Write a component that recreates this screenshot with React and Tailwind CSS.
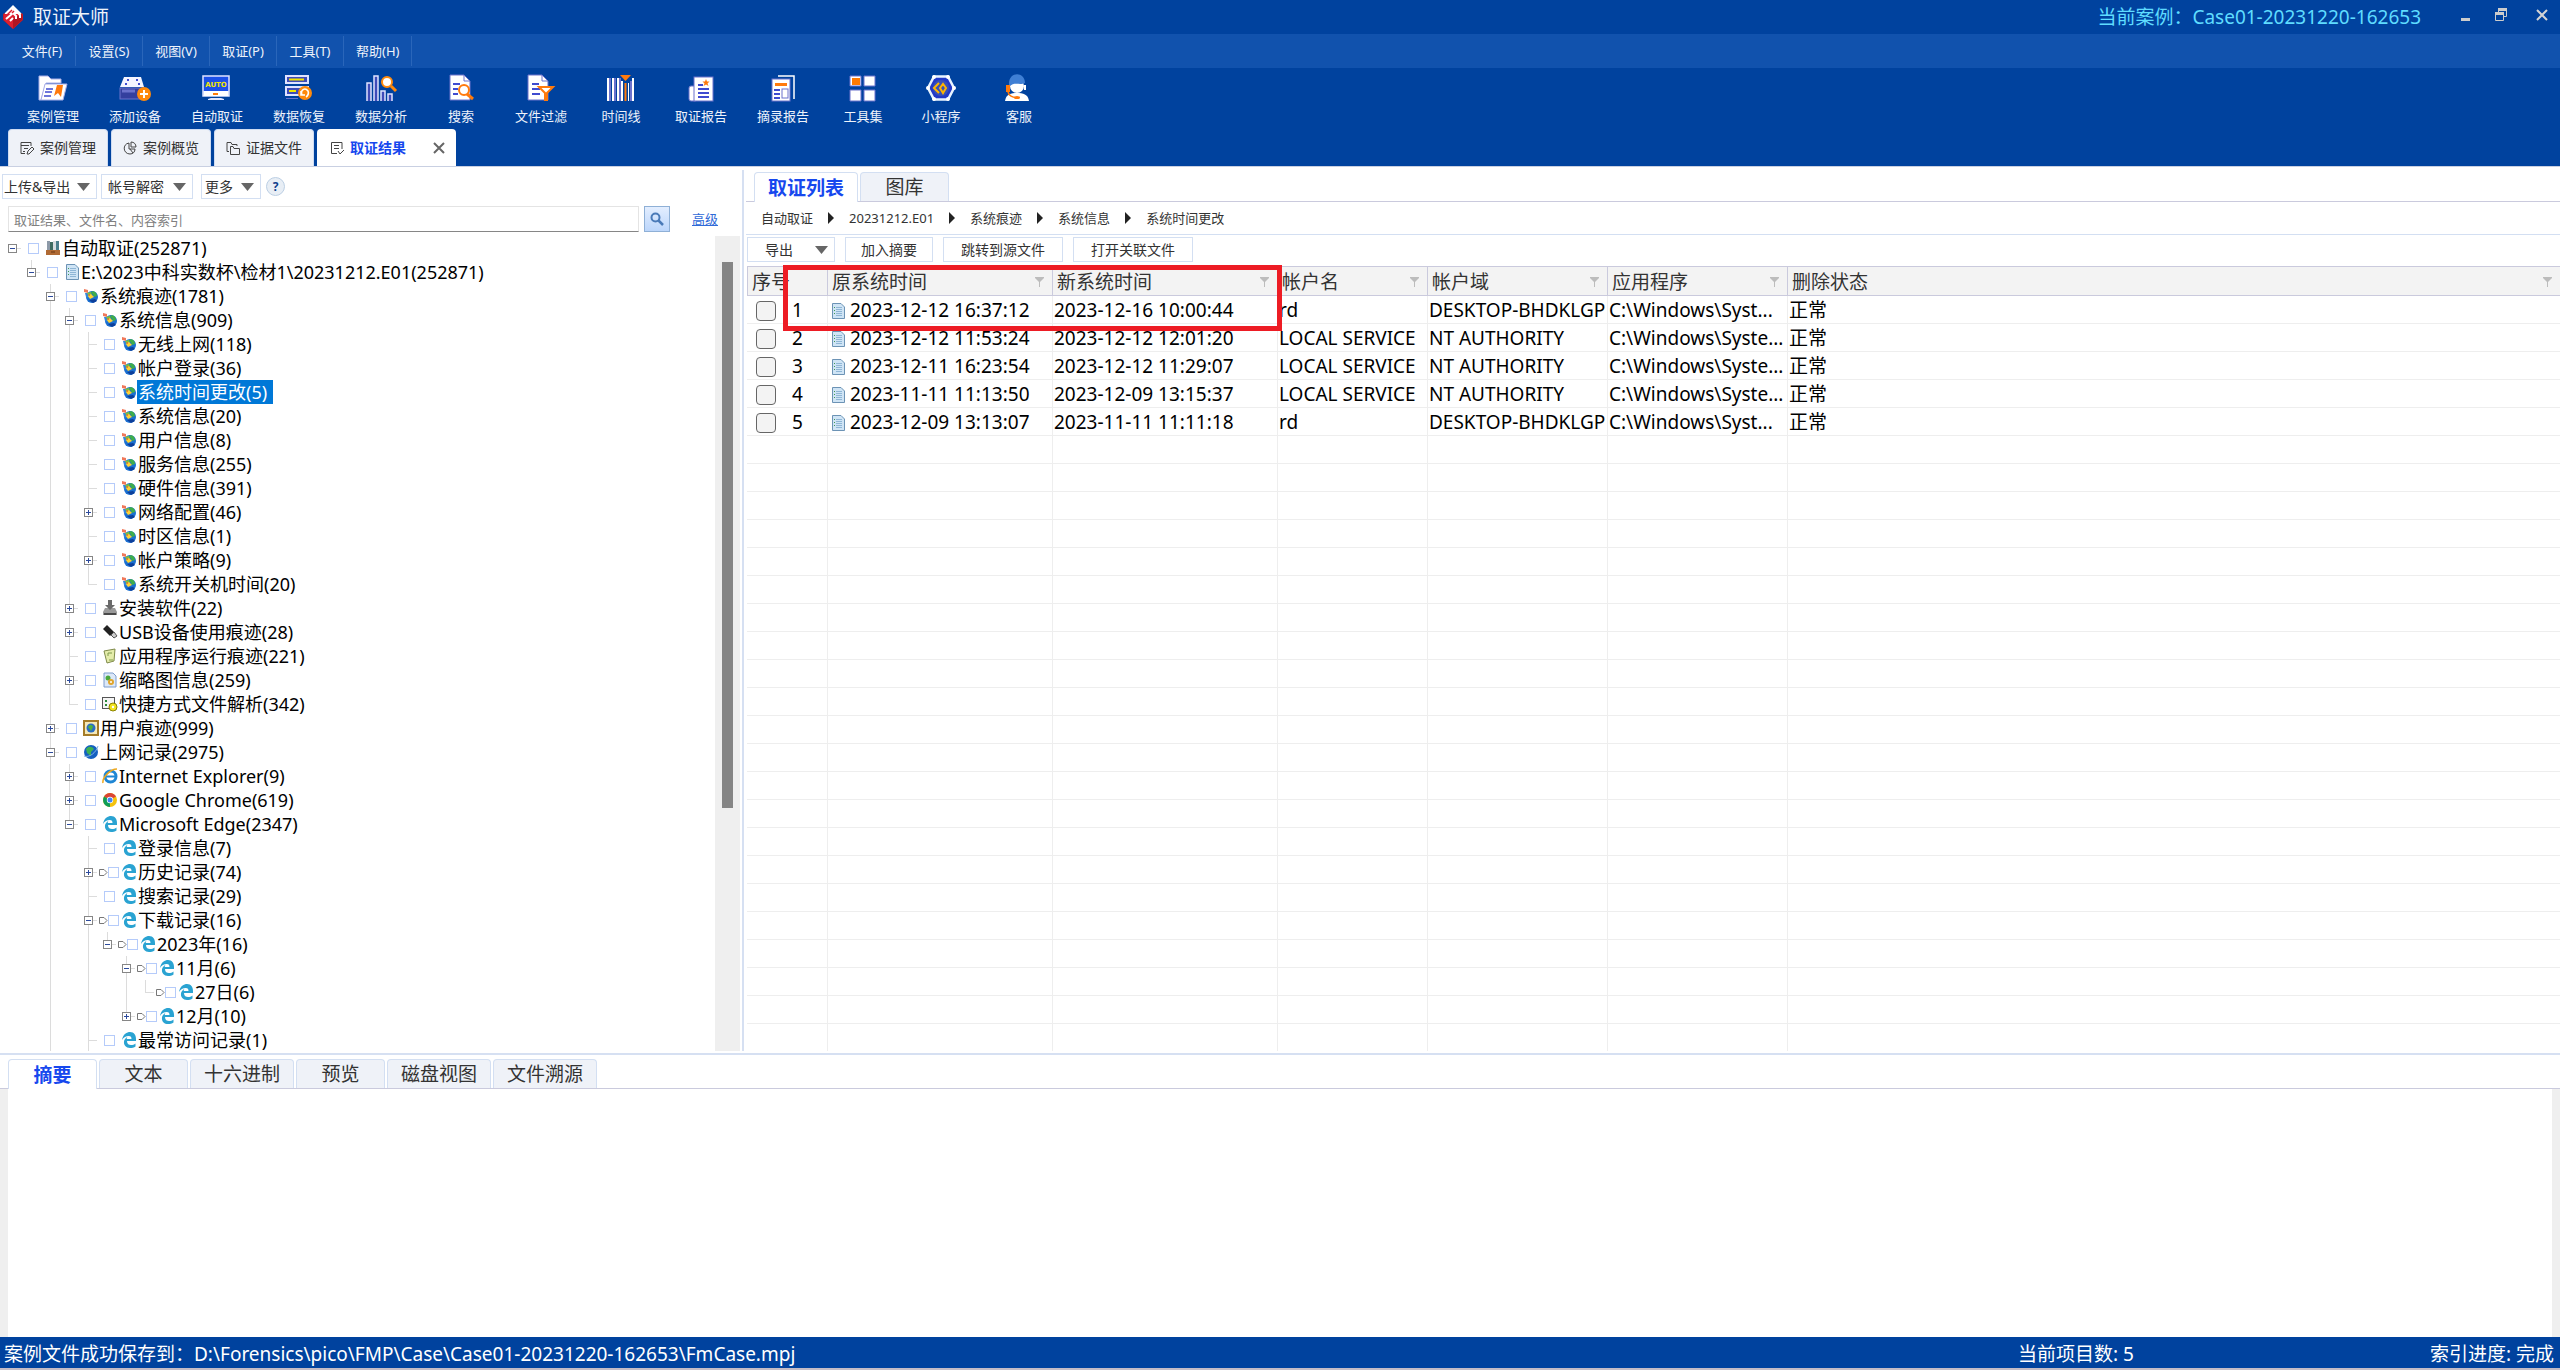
import React from "react";

/* ---------- window icons ---------- */

function Logo() {
  return (
    <svg width="20" height="24" viewBox="0 0 20 24" aria-hidden="true">
      <path d="M10 0 L19 9 H1 Z" fill="#fff" />
      <path d="M0 9 L2 8 V14 L10 24 L18 14 V8 L20 9 V15 L10 24 L0 15 Z" fill="#c41824" />
      <path d="M1 9 H19 V15 L10 24 L1 15 Z" fill="#dc2030" />
      <path d="M10 14 L19 9 V15 L10 24 Z" fill="#b01622" />
      <path d="M3 14 L10 8 L13 11 V14 M7 16 L10 13 M12 5 L17 10 V13" fill="none" stroke="#fff" strokeWidth="2" />
      <path d="M4 10 L9 5 M9 8 L11 6" stroke="#dc2030" strokeWidth="1.500" />
    </svg>
  );
}

function Caret() {
  return (
    <svg width="13" height="8" viewBox="0 0 13 8" aria-hidden="true">
      <path d="M0 0 H13 L6.500 8 Z" fill="#666" />
    </svg>
  );
}

const V = "#6b72cc";
const O = "#ff7a0c";

const toolbar = [
  {
    label: "案例管理",
    icon: (
      <>
        <path d="M1 25 V1 H10 L13 4 H23 V8 H8 L3 25 Z" fill="#fff" stroke="#a8aee8" />
        <path d="M7 9 H29 L25 25 H3 Z" fill="#fff" stroke="#a8aee8" />
        <path d="M8 14 H15 M7 17 H14 M6 21 H13" stroke="#3f4bd0" strokeWidth="1.500" />
        <path d="M19 10 H25 L23 22 L20 18 L16 21 Z" fill={O} />
      </>
    ),
  },
  {
    label: "添加设备",
    icon: (
      <>
        <path d="M4 2 H21 L24 12 H0 Z" fill="#f4f5ff" />
        <rect x="0" y="13" width="24" height="11" fill="#343f9e" stroke={V} />
        <path d="M2 16 H15" stroke={V} strokeWidth="3" />
        <path d="M7 5 h2 M16 5 h2 M5 9 h2 M18 9 h2" stroke="#3f4bd0" strokeWidth="2" />
        <circle cx="24" cy="19" r="7" fill="#ff8a0c" />
        <path d="M20 19 H28 M24 15 V23" stroke="#fff" strokeWidth="2" />
      </>
    ),
  },
  {
    label: "自动取证",
    icon: (
      <>
        <rect x="1" y="1" width="26" height="20" fill="#1c50e8" stroke="#dfe3ff" strokeWidth="1.500" />
        <rect x="1.500" y="16" width="25" height="5" fill="#fff" />
        <text x="14" y="12" textAnchor="middle" fontSize="7" fontWeight="700" fontFamily="DejaVu Sans, sans-serif" fill="#f2e500">AUTO</text>
        <path d="M11 19 H16" stroke={O} strokeWidth="2" />
        <path d="M9 23 H19 L22 24 V25 H6 V24 Z" fill="#dfe3ff" />
      </>
    ),
  },
  {
    label: "数据恢复",
    icon: (
      <>
        <rect x="2" y="1" width="22" height="7" fill="#3f4bb8" stroke="#dfe3ff" strokeWidth="2" />
        <rect x="2" y="12" width="22" height="8" fill="#3f4bb8" stroke="#dfe3ff" strokeWidth="2" />
        <path d="M5 4.500 H20 M5 16 H12" stroke="#f2e500" strokeWidth="2" />
        <path d="M2 23.500 H14" stroke={V} />
        <circle cx="21" cy="18" r="7" fill="#ff8a0c" />
        <path d="M18 20 C16 15 21 12 24 16 C25 18 24 21 22 22 M17 16 V20 H21" fill="none" stroke="#fff" strokeWidth="1.600" />
      </>
    ),
  },
  {
    label: "数据分析",
    icon: (
      <>
        <path d="M1 26 V8 H5 V26 M8 26 V1 H12 V26 M15 26 V16 H19 V26 M22 26 V19 H26 V26" fill="#3f4bb8" stroke="#dfe3ff" strokeWidth="1.500" />
        <circle cx="21" cy="7" r="5" fill="#fff" stroke="#ff8a0c" strokeWidth="2" />
        <path d="M25 11 L30 16" stroke="#ff8a0c" strokeWidth="3" />
      </>
    ),
  },
  {
    label: "搜索",
    icon: (
      <>
        <path d="M4 0 H18 L24 6 V25 H4 Z" fill="#fff" stroke={V} />
        <path d="M18 0 V6 H24" fill="none" stroke={V} />
        <path d="M7 9 H14 M7 14 H12 M7 19 H12" stroke="#3f4bd0" strokeWidth="2" />
        <circle cx="18" cy="15" r="5" fill="#fff" stroke={O} strokeWidth="2" />
        <path d="M21 19 L27 24" stroke={O} strokeWidth="3" />
      </>
    ),
  },
  {
    label: "文件过滤",
    icon: (
      <>
        <path d="M2 0 H16 L22 6 V25 H2 Z" fill="#fff" stroke={V} />
        <path d="M16 0 V6 H22" fill="none" stroke={V} />
        <path d="M6 9 H13 M6 14 H14 M6 19 H14" stroke="#3f4bd0" strokeWidth="2" />
        <path d="M13 12 H27 L21 18 V25 H19 V18 Z" fill="#fff" stroke={O} strokeWidth="2" />
      </>
    ),
  },
  {
    label: "时间线",
    icon: (
      <>
        <path d="M2 3 V26 M7 3 V26 M12 3 V26 M16 6 V26 M27 3 V26" stroke="#fff" strokeWidth="2" />
        <path d="M4 3 V26 M9 3 V26 M14 3 V26 M25 6 V26" stroke={V} strokeWidth="2" />
        <path d="M22.500 8 V26" stroke="#fff" />
        <path d="M14 0 H25 L19.500 6 Z" fill={O} />
        <path d="M19.500 8 V26" stroke={O} strokeWidth="2" />
      </>
    ),
  },
  {
    label: "取证报告",
    icon: (
      <>
        <rect x="3" y="11" width="8" height="15" rx="2" fill="#fff" stroke={V} />
        <rect x="8" y="2" width="19" height="24" fill="#fff" stroke={V} />
        <path d="M12 10 H17 M12 14 H23 M12 18 H23 M12 22 H23" stroke="#3f4bd0" strokeWidth="2" />
        <path d="M20 4 l1 2.500 h2.500 l-2 2 l1 2.500 l-2.500 -1.500 l-2.500 1.500 l1 -2.500 l-2 -2 h2.500 Z" fill={O} />
      </>
    ),
  },
  {
    label: "摘录报告",
    icon: (
      <>
        <path d="M10 1 H26 V24" fill="none" stroke="#fff" strokeWidth="1.500" />
        <rect x="4" y="4" width="18" height="22" fill="#fff" stroke={V} />
        <rect x="7" y="8" width="12" height="3" fill={O} />
        <path d="M6 15 H12 M6 19 H12 M6 23 H12" stroke="#3f4bd0" strokeWidth="2" />
        <rect x="14" y="14" width="6" height="9" fill="none" stroke={V} />
      </>
    ),
  },
  {
    label: "工具集",
    icon: (
      <>
        <path d="M2 1 H13 V11 H2 Z M16 1 H27 V11 H16 Z M2 15 H13 V26 H2 Z M16 15 H27 V26 H16 Z" fill="#fff" stroke={V} />
        <rect x="4" y="3" width="8" height="7" fill="#ff7a00" />
      </>
    ),
  },
  {
    label: "小程序",
    icon: (
      <>
        <path d="M8 1.500 H22 L28 13 L22 24.500 H8 L2 13 Z" fill="#2238c8" stroke="#e8f4ff" strokeWidth="2.500" />
        <circle cx="15" cy="13" r="8" fill="#3850b8" />
        <path d="M13 8 L8 13 L13 18 M14 13 L17 9 L20 13 L17 18 Z" fill="none" stroke="#ffb400" strokeWidth="2" />
        <g fill="#fff">
          <circle cx="8" cy="2" r="2" /><circle cx="22" cy="2" r="2" /><circle cx="28" cy="13" r="2" />
          <circle cx="22" cy="24" r="2" /><circle cx="8" cy="24" r="2" /><circle cx="2" cy="13" r="2" />
        </g>
      </>
    ),
  },
  {
    label: "客服",
    icon: (
      <>
        <circle cx="13" cy="11" r="7" fill="#fff" />
        <path d="M5 10 C4 -4 21 -4 21 8 C15 11 11 6 5 12 Z" fill="#3f7fd4" />
        <path d="M1 26 C2 19 7 18 13 18 C19 18 24 19 25 26 Z" fill="#fff" />
        <rect x="2" y="10" width="4" height="7" fill={O} />
        <path d="M4 17 C5 21 8 22 13 23" fill="none" stroke={O} strokeWidth="1.500" />
        <ellipse cx="13" cy="22.500" rx="3" ry="1.500" fill={O} />
        <path d="M21 10 V15" stroke="#fff" strokeWidth="2" />
      </>
    ),
  },
];

const menus = ["文件(F)", "设置(S)", "视图(V)", "取证(P)", "工具(T)", "帮助(H)"];

const mainTabs = [
  {
    label: "案例管理",
    icon: <path d="M11 5 V1.500 H1 V12.500 H5 M1 4.500 H9 M4 7.500 H8 M3 10.500 H5 M7 13 L8 10 L12 6 L14 8 L9 13 Z" />,
  },
  {
    label: "案例概览",
    icon: <path d="M6 2 C-1 3 0 13 7 13 C10 13 12 11 12 8 H6 Z M8 1 V6 H13 C13 3 11 1 8 1 Z M7 8 L10 12" />,
  },
  {
    label: "证据文件",
    icon: <path d="M3 10.500 H1 V1.500 H5 L6 3.500 H11 V5 M4.500 5.500 H7 L8 7.500 H13.500 V13.500 H4.500 Z" />,
  },
  {
    label: "取证结果",
    active: true,
    icon: <path d="M12 8 V1.500 H1.500 V12.500 H7 M4 4.500 H9 M4 7.500 H9 M8 10 L10 13 L14 9" />,
  },
];

/* ---------- tree icons ---------- */

function Globe() {
  return (
    <>
      <circle cx="9" cy="9" r="6" fill="#1b6fd0" />
      <path d="M8 4 C11 2 14 5 14 8 L11 9 L10 7 Z" fill="#3fae4a" />
      <path d="M6 12 L10 15 L14 13 L12 11 Z" fill="#0d3f9a" />
      <path d="M1 1 L5 2 L5 5 L1 4 Z" fill="#f0785a" />
      <path d="M4 5 L8 4 L9 8 L5 9 Z" fill="#7cc23c" />
      <path d="M2 5 L4 5 L6 10 L3 9 Z" fill="#3584dc" />
      <path d="M5 8 L8 6 L11 9 L7 11 Z" fill="#ffd233" />
      <path d="M5 7 L7 6 L7 8 Z" fill="#f0583a" />
    </>
  );
}

function DocGlyph() {
  return (
    <>
      <path d="M2.500 0.500 H11 L14.500 4 V15.500 H2.500 Z" fill="#cfe4f5" stroke="#6c93b5" />
      <path d="M4 4.500 H5 M4 7.500 H5 M4 10.500 H5" stroke="#3f9a55" />
      <path d="M6 4.500 H12 M6 6.500 H12 M6 8.500 H12 M6 10.500 H12 M6 12.500 H12" stroke="#8fb6d6" />
    </>
  );
}

function EdgeGlyph() {
  return (
    <path
      d="M1 8 C2 2 6 0 9 0 C13 0 15.500 3 15 9 H6 C6 12 8 13 10 13 C12 13 13 12.500 14.500 11.500 V14.500 C13 15.500 11 16 9 16 C5 16 2.500 13 3 9.500 C3.300 7.500 4.500 6 6.500 5 C5.800 5.800 5.800 6.500 5.800 7 H10.500 C10.500 5 9.800 4 7.800 4 C5 4 2.500 5.500 1 8 Z"
      fill="#2aa3d2"
    />
  );
}

const treeIcons = {
  books: (
    <>
      <path d="M2 1 H5 V11 H2 Z" fill="#8d9aa8" /><path d="M5 2 H8 V11 H5 Z" fill="#3f6b60" />
      <path d="M8 1 H11 V11 H8 Z" fill="#d8dde0" /><path d="M11 1 H14 V11 H11 Z" fill="#4b7f8c" />
      <path d="M1 10 H15 V15 H1 Z" fill="#b06a34" /><path d="M6 12 H10" stroke="#6b3612" />
    </>
  ),
  doc: <DocGlyph />,
  sys: <Globe />,
  install: (
    <>
      <path d="M3 8 H13 L15 12 V15 H1 V12 Z" fill="#9a9a9a" /><path d="M2 13 H14 V15 H2 Z" fill="#4a4a4a" />
      <path d="M6 0 H10 V5 H13 L8 10 L3 5 H6 Z" fill="#6a6a6a" />
    </>
  ),
  usb: (
    <>
      <path d="M1 5 L5 1 L12 8 L8 12 Z" fill="#222" /><path d="M9 11 L12 8 L15 12 L12 14 Z" fill="#ccc" stroke="#555" />
    </>
  ),
  note: (
    <>
      <path d="M2 3 L13 1 L12 13 L5 15 Z" fill="#e4ecaa" stroke="#7f8a4a" /><path d="M6 5 H10 M6 5 V8 M7 12 H11" stroke="#7f9a4a" />
    </>
  ),
  thumb: (
    <>
      <path d="M2 1 H11 L14 4 V15 H2 Z" fill="#dce8f8" stroke="#7c9ccc" />
      <circle cx="6" cy="6" r="2.500" fill="#4aa83c" /><circle cx="9" cy="10" r="3" fill="#e0a52c" /><circle cx="9" cy="10" r="1" fill="#fff" />
    </>
  ),
  shortcut: (
    <>
      <rect x="0.500" y="1.500" width="12" height="11" fill="#f5f5f5" stroke="#555" /><path d="M3 5 H5 M3 9 H5" stroke="#2a8a3a" strokeWidth="2" />
      <circle cx="11" cy="11" r="4" fill="#f2e21c" stroke="#8c8400" /><circle cx="11" cy="11" r="1.200" fill="#fff" />
    </>
  ),
  user: (
    <>
      <rect x="1" y="1" width="14" height="14" fill="#f4e8b8" stroke="#a57c28" strokeWidth="2" />
      <circle cx="8" cy="8" r="4.500" fill="#2a6cc4" /><path d="M5 7 C7 4 10 5 10 7 L8 11 Z" fill="#4fb040" />
    </>
  ),
  web: (
    <>
      <circle cx="8" cy="8" r="7" fill="#1460c0" /><path d="M3 5 C6 1 10 3 11 5 L8 8 L8 12 L4 9 Z" fill="#3cb054" />
      <path d="M1 12 C6 14 13 9 15 2" fill="none" stroke="#7ab0e4" />
    </>
  ),
  ie: (
    <>
      <circle cx="8.500" cy="8.500" r="5.500" fill="none" stroke="#1e86d4" strokeWidth="3" />
      <path d="M4 8.500 H14" stroke="#1e86d4" strokeWidth="2" />
      <path d="M1 15 C0 10 8 1 15 1" fill="none" stroke="#eea81e" strokeWidth="1.500" />
    </>
  ),
  chrome: (
    <>
      <circle cx="8" cy="8" r="7" fill="#f4c20d" />
      <path d="M8 8 L2 4.500 A7 7 0 0 1 14 4.500 Z" fill="#db4437" />
      <path d="M8 8 L2 4.500 A7 7 0 0 0 8 15 Z" fill="#0f9d58" />
      <circle cx="8" cy="8" r="3.200" fill="#fff" /><circle cx="8" cy="8" r="2.500" fill="#4285f4" />
    </>
  ),
  edge: <EdgeGlyph />,
};

/* level, state ("-" open, "+" closed, "" leaf), icon, text, options */
const tree = [
  [0, "-", "books", "自动取证(252871)"],
  [1, "-", "doc", "E:\\2023中科实数杯\\检材1\\20231212.E01(252871)"],
  [2, "-", "sys", "系统痕迹(1781)"],
  [3, "-", "sys", "系统信息(909)"],
  [4, "", "sys", "无线上网(118)"],
  [4, "", "sys", "帐户登录(36)"],
  [4, "", "sys", "系统时间更改(5)", { selected: true }],
  [4, "", "sys", "系统信息(20)"],
  [4, "", "sys", "用户信息(8)"],
  [4, "", "sys", "服务信息(255)"],
  [4, "", "sys", "硬件信息(391)"],
  [4, "+", "sys", "网络配置(46)"],
  [4, "", "sys", "时区信息(1)"],
  [4, "+", "sys", "帐户策略(9)"],
  [4, "", "sys", "系统开关机时间(20)"],
  [3, "+", "install", "安装软件(22)"],
  [3, "+", "usb", "USB设备使用痕迹(28)"],
  [3, "", "note", "应用程序运行痕迹(221)"],
  [3, "+", "thumb", "缩略图信息(259)"],
  [3, "", "shortcut", "快捷方式文件解析(342)"],
  [2, "+", "user", "用户痕迹(999)"],
  [2, "-", "web", "上网记录(2975)", { more: true }],
  [3, "+", "ie", "Internet Explorer(9)"],
  [3, "+", "chrome", "Google Chrome(619)"],
  [3, "-", "edge", "Microsoft Edge(2347)"],
  [4, "", "edge", "登录信息(7)"],
  [4, "+", "edge", "历史记录(74)", { tag: true }],
  [4, "", "edge", "搜索记录(29)"],
  [4, "-", "edge", "下载记录(16)", { tag: true }],
  [5, "-", "edge", "2023年(16)", { tag: true }],
  [6, "-", "edge", "11月(6)", { tag: true }],
  [7, "", "edge", "27日(6)", { tag: true }],
  [6, "+", "edge", "12月(10)", { tag: true }],
  [4, "", "edge", "最常访问记录(1)", { more: true }],
];

function continues(index, level) {
  let start = index;
  while (start > 0 && tree[start][0] > level) start -= 1;
  if (tree[start][0] === level && tree[start][4]?.more) return true;
  for (let i = index + 1; i < tree.length; i += 1) {
    if (tree[i][0] < level) return false;
    if (tree[i][0] === level) return true;
  }
  return false;
}

function Branch({ top, bottom, arm, state }) {
  return (
    <svg width="19" height="24" viewBox="0 0 19 24" aria-hidden="true" className="block shrink-0">
      {top && <path d="M9.500 0 V12" stroke="#dcdcdc" />}
      {bottom && <path d="M9.500 12 V24" stroke="#dcdcdc" />}
      {arm && <path d="M9 12.500 H18" stroke="#dcdcdc" />}
      {state && (
        <>
          <rect x="5.500" y="8.500" width="8" height="8" fill="#fff" stroke="#868686" />
          <path d={state === "+" ? "M7 12.500 H12 M9.500 10 V15" : "M7 12.500 H12"} stroke="#2c4a9c" />
        </>
      )}
    </svg>
  );
}

function TreeRow({ row, index }) {
  const [level, state, icon, text, opts = {}] = row;
  const id = `node-${index}`;
  const branch = <Branch top={level > 0} bottom={level > 0 && continues(index, level)} arm state={state} />;
  return (
    <li className="flex h-6 items-center pl-[3px]">
      {Array.from({ length: level }, (_, l) => {
        const on = l > 0 && continues(index, l);
        return <Branch key={l} top={on} bottom={on} />;
      })}
      {state ? <button type="button" aria-label={state === "+" ? "展开" : "收起"}>{branch}</button> : branch}
      <span className="flex w-[23px] shrink-0 items-center">
        {opts.tag ? (
          <svg width="10" height="9" viewBox="0 0 10 9" aria-hidden="true">
            <path d="M1.500 1.500 H6 L9 4.500 L6 7.500 H1.500 Z" fill="#fff" stroke="#777" />
          </svg>
        ) : (
          <span className="w-1.5" />
        )}
        <input id={id} type="checkbox" className="size-[11px] shrink-0 appearance-none border border-[#b5cbfa] bg-white" />
      </span>
      <svg width="16" height="16" viewBox="0 0 16 16" aria-hidden="true" className="shrink-0">{treeIcons[icon]}</svg>
      <label
        htmlFor={id}
        className={
          opts.selected
            ? "h-6 bg-[#0078d7] pr-1.5 pl-px text-lg leading-6 whitespace-nowrap text-white"
            : "h-6 pl-px text-lg leading-6 whitespace-nowrap text-black"
        }
      >
        {text}
      </label>
    </li>
  );
}

/* ---------- result table ---------- */

const columns = ["序号", "原系统时间", "新系统时间", "帐户名", "帐户域", "应用程序", "删除状态"];
const rows = [
  ["2023-12-12 16:37:12", "2023-12-16 10:00:44", "rd", "DESKTOP-BHDKLGP", "C:\\Windows\\Syst...", "正常"],
  ["2023-12-12 11:53:24", "2023-12-12 12:01:20", "LOCAL SERVICE", "NT AUTHORITY", "C:\\Windows\\Syste...", "正常"],
  ["2023-12-11 16:23:54", "2023-12-12 11:29:07", "LOCAL SERVICE", "NT AUTHORITY", "C:\\Windows\\Syste...", "正常"],
  ["2023-11-11 11:13:50", "2023-12-09 13:15:37", "LOCAL SERVICE", "NT AUTHORITY", "C:\\Windows\\Syste...", "正常"],
  ["2023-12-09 13:13:07", "2023-11-11 11:11:18", "rd", "DESKTOP-BHDKLGP", "C:\\Windows\\Syst...", "正常"],
];
const blanks = Array.from({ length: 22 }, (_, i) => i);

function ResultTable() {
  return (
    <div className="relative mt-1 min-h-0 flex-1">
      <div className="h-full overflow-hidden">
        <table className="w-full table-fixed border-separate border-spacing-0 text-[19px] leading-[25px] text-black">
          <colgroup>
            <col className="w-[81px]" />
            <col className="w-[225px]" />
            <col className="w-[225px]" />
            <col className="w-[150px]" />
            <col className="w-[180px]" />
            <col className="w-[180px]" />
            <col />
          </colgroup>
          <thead>
            <tr>
              {columns.map((name, i) => (
                <th
                  key={name}
                  className="h-[30px] border-y border-r border-[#cacadd] bg-[#f3f3f3] p-0 pt-0.5 text-left font-normal text-[#333] first:border-l last:border-r-0"
                >
                  <div className="flex items-center justify-between pr-2 pl-1">
                    <span className="whitespace-nowrap">{name}</span>
                    {i > 0 && (
                      <button type="button" aria-label={`筛选${name}`}>
                        <svg width="9" height="10" viewBox="0 0 9 10" className="block">
                          <path d="M0 0 H9 V1 L5 5 V10 H4 V5 L0 1 Z" fill="#bcbcbc" />
                        </svg>
                      </button>
                    )}
                  </div>
                </th>
              ))}
            </tr>
          </thead>
          <tbody>
            {rows.map((cells, r) => (
              <tr key={cells[0]}>
                <td className="h-7 border-r border-b border-[#eeeeee] p-0 pt-0.5">
                  <label className="flex items-center gap-4 pl-[9px]">
                    <input type="checkbox" className="size-5 appearance-none rounded-sm border border-[#666] bg-[#f3f3f3]" />
                    {r + 1}
                  </label>
                </td>
                {cells.map((cell, c) => (
                  <td key={c} className="h-7 border-r border-b border-[#eeeeee] p-0 pt-0.5 pl-px whitespace-nowrap last:border-r-0">
                    {c === 0 ? (
                      <span className="flex items-center gap-1 pl-px">
                        <svg width="16" height="16" viewBox="0 0 16 16" aria-hidden="true"><DocGlyph /></svg>
                        {cell}
                      </span>
                    ) : (
                      cell
                    )}
                  </td>
                ))}
              </tr>
            ))}
            {blanks.map((b) => (
              <tr key={b}>
                {columns.map((name) => (
                  <td key={name} className="h-7 border-r border-b border-[#eeeeee] p-0 last:border-r-0" />
                ))}
              </tr>
            ))}
          </tbody>
        </table>
      </div>
      <div className="pointer-events-none absolute -top-px left-9 h-[66px] w-[499px] border-[5px] border-[#ed1c24]" />
    </div>
  );
}

const crumbs = ["自动取证", "20231212.E01", "系统痕迹", "系统信息", "系统时间更改"];
const detailTabs = ["摘要", "文本", "十六进制", "预览", "磁盘视图", "文件溯源"];

function FlatButton({ children, className }) {
  return (
    <button type="button" className={`flex h-[25px] items-center border border-[#d3dff2] bg-white text-sm leading-5 text-[#333] ${className}`}>
      {children}
    </button>
  );
}

export default function App() {
  return (
    <div className="flex h-screen flex-col overflow-hidden bg-white font-['Noto_Sans','Noto_Sans_CJK_SC',sans-serif]">
      <header className="bg-[#00429e] text-[#eef3fb]">
        <div className="flex h-[34px] items-center pl-[3px]">
          <Logo />
          <h1 className="ml-2.5 flex-1 text-[19px] leading-[26px]">取证大师</h1>
          <p className="text-[19px] leading-[26px] text-[#5fdcff]">当前案例：Case01-20231220-162653</p>
          <div className="ml-8 flex w-[107px] items-center justify-between pr-3">
            <button type="button" aria-label="最小化" className="flex h-5 w-6 items-center justify-center">
              <svg width="11" height="11" viewBox="0 0 11 11"><path d="M1 6 H10 V9 H1 Z" fill="#ccc" /></svg>
            </button>
            <button type="button" aria-label="还原">
              <svg width="12" height="14" viewBox="0 0 12 14" className="mb-1 block">
                <path d="M3.500 4 V1 M3 1.500 H12 M11.500 1 V8.500 H9" fill="none" stroke="#ccc" />
                <path d="M3 0 H12 V3 H3 Z M0 4 H9 V7 H0 Z" fill="#ccc" />
                <path d="M0.500 5 V12.500 H8.500 V5" fill="none" stroke="#ccc" />
              </svg>
            </button>
            <button type="button" aria-label="关闭" className="pl-3">
              <svg width="12" height="12" viewBox="0 0 12 12" className="mb-1 block">
                <path d="M1 1 L11 11 M11 1 L1 11" stroke="#d4d4d4" strokeWidth="2" />
              </svg>
            </button>
          </div>
        </div>
        <nav className="flex h-[34px] bg-[#1152ad] py-0.5 pl-[9px]">
          {menus.map((m) => (
            <button key={m} type="button" className="min-w-[67px] border-r border-[#2a66ba] px-3 text-[13px] leading-5">{m}</button>
          ))}
        </nav>
        <div className="flex h-[61px] pt-[7px] pl-3">
          {toolbar.map((t) => (
            <button key={t.label} type="button" className="flex min-w-[78px] flex-col items-center gap-1 px-[15px] text-[13px] leading-5">
              <svg width="30" height="27" viewBox="0 0 30 27" aria-hidden="true" className="overflow-visible">{t.icon}</svg>
              {t.label}
            </button>
          ))}
        </div>
        <div className="flex h-[37px] gap-[3px] pl-2">
          {mainTabs.map((t) => (
            <button
              key={t.label}
              type="button"
              className={
                t.active
                  ? "flex items-center gap-1.5 rounded-t bg-white pr-[11px] pl-[13px] text-sm leading-5 font-bold text-[#1748ee]"
                  : "flex items-center gap-1.5 rounded-t border border-b-0 border-[#cfdcf2] bg-[#eff2f8] px-[11px] text-sm leading-5 text-[#333]"
              }
            >
              <svg width="14" height="14" viewBox="0 0 14 14" fill="none" stroke="#444" aria-hidden="true">{t.icon}</svg>
              {t.label}
              {t.active && (
                <svg width="12" height="12" viewBox="0 0 12 12" className="ml-[21px]" aria-hidden="true">
                  <path d="M1 1 L11 11 M11 1 L1 11" stroke="#666" strokeWidth="2" />
                </svg>
              )}
            </button>
          ))}
        </div>
      </header>

      <main className="flex min-h-0 flex-1 border-t border-[#c9d0e2] pb-0.5">
        <section className="flex w-[742px] shrink-0 flex-col">
          <div className="flex items-center pt-[7px] pl-0.5">
            <FlatButton className="w-[95px] justify-between pr-1.5 pl-px">上传&导出<Caret /></FlatButton>
            <FlatButton className="ml-1 w-[92px] justify-between px-1.5">帐号解密<Caret /></FlatButton>
            <FlatButton className="ml-2 w-[60px] justify-between pr-1.5 pl-[3px]">更多<Caret /></FlatButton>
            <button type="button" aria-label="帮助" className="ml-[5px] size-[19px] rounded-full border border-[#bccfe4] bg-[#e8eef5] text-xs leading-4 font-bold text-[#0f3f8c]">?</button>
          </div>
          <div className="flex items-center pt-[7px] pl-2">
            <input
              type="text"
              aria-label="搜索"
              placeholder="取证结果、文件名、内容索引"
              className="h-[26px] w-[631px] border border-[#e4e4e4] border-b-[#868686] px-[5px] pt-0.5 text-[13px] leading-5 placeholder:text-[#808080]"
            />
            <button type="button" aria-label="搜索" className="ml-[5px] flex h-[26px] w-[26px] items-center justify-center border border-[#8fb0d6] bg-linear-to-b from-[#e3eeff] to-[#bcd6fb]">
              <svg width="14" height="14" viewBox="0 0 14 14" fill="none" stroke="#4a7ab8" strokeWidth="2">
                <circle cx="5.500" cy="5.500" r="4" /><path d="M8.500 8.500 L13 13" strokeWidth="2.500" />
              </svg>
            </button>
            <a href="#advanced" className="ml-[22px] text-[13px] leading-5 text-[#2f6ad8] underline">高级</a>
          </div>
          <div className="mt-1 flex min-h-0 flex-1">
            <ul className="flex-1 overflow-hidden">
              {tree.map((row, i) => <TreeRow key={i} row={row} index={i} />)}
            </ul>
            <div className="mr-0.5 w-[25px] bg-[#efefef] px-[7px] pt-[26px]">
              <div className="h-9/13 bg-[#858585]" />
            </div>
          </div>
        </section>

        <section className="mt-[3px] flex min-w-0 flex-1 flex-col border-l-2 border-[#d6e0f2]">
          <div className="ml-0.5 flex h-8 items-end gap-0.5 border-b border-[#cacadd] pl-2 text-[19px]">
            <button type="button" className="-mb-px h-[30px] rounded-t border border-b-0 border-[#d3dff2] bg-white px-[13px] leading-[26px] font-bold text-[#1748ee]">取证列表</button>
            <button type="button" className="h-[29px] w-[89px] rounded-t border border-b-0 border-[#d3dff2] bg-[#eff2f8] leading-[26px] text-[#333]">图库</button>
          </div>
          <nav className="ml-0.5 flex h-[33px] items-center gap-[15px] border-b border-[#d3dff2] pl-[15px] text-[13px] leading-5 text-[#333]">
            {crumbs.map((c, i) => (
              <React.Fragment key={c}>
                {i > 0 && (
                  <svg width="6" height="12" viewBox="0 0 6 12" aria-hidden="true"><path d="M0 0 L6 6 L0 12 Z" fill="#222" /></svg>
                )}
                <a href="#crumb">{c}</a>
              </React.Fragment>
            ))}
          </nav>
          <div className="ml-[3px] flex gap-2.5 pt-0.5">
            <FlatButton className="w-[88px] justify-between pr-1.5 pl-[17px]">导出<Caret /></FlatButton>
            <FlatButton className="w-[88px] justify-center">加入摘要</FlatButton>
            <FlatButton className="w-[120px] justify-center">跳转到源文件</FlatButton>
            <FlatButton className="w-[120px] justify-center">打开关联文件</FlatButton>
          </div>
          <div className="ml-[3px] flex min-h-0 flex-1 flex-col">
            <ResultTable />
          </div>
        </section>
      </main>

      <section className="flex h-[284px] shrink-0 flex-col border-t-2 border-[#d6e0f2]">
        <div className="flex h-[34px] shrink-0 items-end gap-0.5 border-b border-[#cacadd] pl-2 text-[19px]">
          {detailTabs.map((t, i) => (
            <button
              key={t}
              type="button"
              className={
                i === 0
                  ? "-mb-px h-[30px] min-w-[89px] rounded-t border border-b-0 border-[#d3dff2] bg-white px-[13px] leading-[26px] font-bold text-[#1748ee]"
                  : "h-[29px] min-w-[89px] rounded-t border border-b-0 border-[#d3dff2] bg-[#eff2f8] px-[13px] leading-[26px] text-[#333]"
              }
            >
              {t}
            </button>
          ))}
        </div>
        <div className="flex-1 border-x-8 border-[#efefef] bg-white" />
      </section>

      <footer className="flex h-[33px] shrink-0 items-center border-b-2 border-[#c4bcc6] bg-[#00429e] pt-0.5 pr-1.5 pl-1 text-[19px] leading-[26px] text-white">
        <p className="flex-1">案例文件成功保存到：D:\Forensics\pico\FMP\Case\Case01-20231220-162653\FmCase.mpj</p>
        <p className="w-[412px]">当前项目数: 5</p>
        <p>索引进度: 完成</p>
      </footer>
    </div>
  );
}
